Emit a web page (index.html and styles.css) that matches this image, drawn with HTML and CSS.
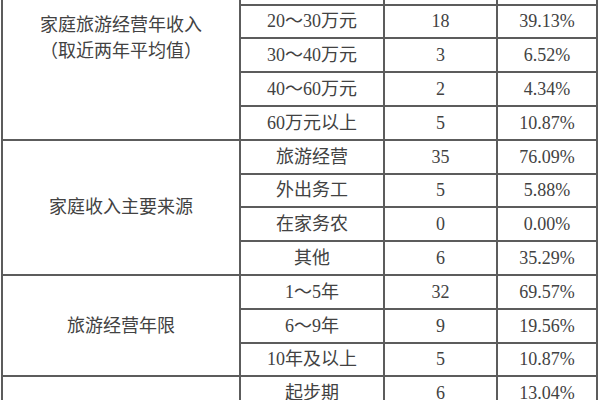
FILE: index.html
```html
<!DOCTYPE html>
<html lang="zh-CN">
<head>
<meta charset="utf-8">
<link rel="stylesheet" href="styles.css">
</head>
<body>
<div class="frame">
<table class="stats">
  <colgroup>
    <col class="c1"><col class="c2"><col class="c3"><col class="c4">
  </colgroup>
  <tbody>
    <tr>
      <td class="group" rowspan="6">家庭旅游经营年收入<br>（取近两年平均值）</td>
      <td></td><td></td><td></td>
    </tr>
    <tr><td></td><td></td><td></td></tr>
    <tr><td>20～30万元</td><td>18</td><td>39.13%</td></tr>
    <tr><td>30～40万元</td><td>3</td><td>6.52%</td></tr>
    <tr><td>40～60万元</td><td>2</td><td>4.34%</td></tr>
    <tr><td>60万元以上</td><td>5</td><td>10.87%</td></tr>

    <tr>
      <td class="group" rowspan="4">家庭收入主要来源</td>
      <td>旅游经营</td><td>35</td><td>76.09%</td>
    </tr>
    <tr><td>外出务工</td><td>5</td><td>5.88%</td></tr>
    <tr><td>在家务农</td><td>0</td><td>0.00%</td></tr>
    <tr><td>其他</td><td>6</td><td>35.29%</td></tr>

    <tr>
      <td class="group" rowspan="3">旅游经营年限</td>
      <td>1～5年</td><td>32</td><td>69.57%</td>
    </tr>
    <tr><td>6～9年</td><td>9</td><td>19.56%</td></tr>
    <tr><td>10年及以上</td><td>5</td><td>10.87%</td></tr>

    <tr>
      <td class="group"></td>
      <td>起步期</td><td>6</td><td>13.04%</td>
    </tr>
  </tbody>
</table>
</div>
</body>
</html>
```

FILE: styles.css
```css
html, body {
  margin: 0;
  padding: 0;
  background: #ffffff;
}

.frame {
  width: 600px;
  height: 400px;
  overflow: hidden;
  background: #ffffff;
}

.stats {
  margin-top: -64px;
  margin-left: 1px;
  width: 595px;
  table-layout: fixed;
  border-collapse: collapse;
  font-family: "Liberation Serif", "Noto Sans CJK SC", serif;
  font-size: 18px;
  color: #424242;
}

.c1 { width: 238px; }
.c2 { width: 144px; }
.c3 { width: 113px; }
.c4 { width: 100px; }

.stats td {
  border: 2px solid #5c5c5c;
  height: 33.8px;
  padding: 0;
  text-align: center;
  vertical-align: middle;
  line-height: 22px;
  box-sizing: border-box;
}

.stats td.group {
  line-height: 26px;
}
```
